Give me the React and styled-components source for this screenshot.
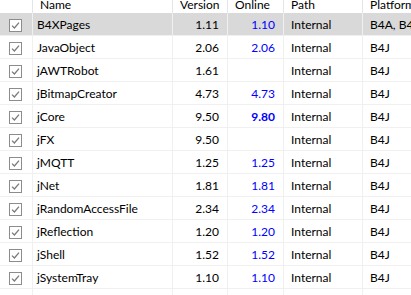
import React from "react";
import styled, { createGlobalStyle } from "styled-components";

const GlobalStyle = createGlobalStyle`
  html, body {
    margin: 0;
    padding: 0;
    background: #ffffff;
  }
  body {
    font-family: Lato, "Noto Sans", sans-serif;
    font-size: 12px;
    color: #000000;
  }
`;

const libraries = [
  { name: "B4XPages", version: "1.11", online: "1.10", path: "Internal", platform: "B4A, B4i, B4J", selected: true },
  { name: "JavaObject", version: "2.06", online: "2.06", path: "Internal", platform: "B4J" },
  { name: "jAWTRobot", version: "1.61", online: "", path: "Internal", platform: "B4J" },
  { name: "jBitmapCreator", version: "4.73", online: "4.73", path: "Internal", platform: "B4J" },
  { name: "jCore", version: "9.50", online: "9.80", path: "Internal", platform: "B4J", newer: true },
  { name: "jFX", version: "9.50", online: "", path: "Internal", platform: "B4J" },
  { name: "jMQTT", version: "1.25", online: "1.25", path: "Internal", platform: "B4J" },
  { name: "jNet", version: "1.81", online: "1.81", path: "Internal", platform: "B4J" },
  { name: "jRandomAccessFile", version: "2.34", online: "2.34", path: "Internal", platform: "B4J" },
  { name: "jReflection", version: "1.20", online: "1.20", path: "Internal", platform: "B4J" },
  { name: "jShell", version: "1.52", online: "1.52", path: "Internal", platform: "B4J" },
  { name: "jSystemTray", version: "1.10", online: "1.10", path: "Internal", platform: "B4J" },
];

function CheckBox() {
  return (
    <svg width="13" height="13" viewBox="0 0 13 13">
      <rect x="0.5" y="0.5" width="12" height="12" fill="#ffffff" stroke="#8c8c8c" />
      <path d="M3 6.6 L5.4 9 L10 3.6" fill="none" stroke="#7a7a7a" strokeWidth="1.3" />
    </svg>
  );
}

export default function App() {
  return (
    <>
      <GlobalStyle />
      <Viewport>
        <Table>
          <HeaderRow>
            <HeadCell />
            <HeadCell>Name</HeadCell>
            <HeadCell>Version</HeadCell>
            <HeadCell>Online</HeadCell>
            <HeadCell>Path</HeadCell>
            <HeadCell>Platform</HeadCell>
          </HeaderRow>
          {libraries.map((lib) => (
            <Row key={lib.name} $selected={lib.selected}>
              <CheckCell>
                <CheckBox />
              </CheckCell>
              <NameCell>{lib.name}</NameCell>
              <NumberCell>{lib.version}</NumberCell>
              <NumberCell $online $bold={lib.newer}>
                {lib.online}
              </NumberCell>
              <TextCell>{lib.path}</TextCell>
              <TextCell>{lib.platform}</TextCell>
            </Row>
          ))}
          <Row>
            <CheckCell />
            <NameCell />
            <NumberCell />
            <NumberCell />
            <TextCell />
            <TextCell />
          </Row>
        </Table>
      </Viewport>
    </>
  );
}

const Viewport = styled.div`
  width: 411px;
  height: 295px;
  overflow: hidden;
  background: #ffffff;
`;

const Table = styled.div`
  width: 480px;
`;

const columns = "33px 140px 55px 56px 79px 117px";

const HeaderRow = styled.div`
  display: grid;
  grid-template-columns: ${columns};
  height: 13px;
  overflow: hidden;
`;

const HeadCell = styled.div`
  box-sizing: border-box;
  border-right: 1px solid #e5e5e5;
  padding-left: 7px;
  line-height: 9px;
  white-space: nowrap;
  overflow: hidden;
`;

const Row = styled.div`
  display: grid;
  grid-template-columns: ${columns};
  box-sizing: border-box;
  height: 23px;
  border-bottom: 1px solid #f0f0f0;
  background: ${(p) => (p.$selected ? "#d9d9d9" : "#ffffff")};
`;

const Cell = styled.div`
  box-sizing: border-box;
  border-right: 1px solid #f0f0f0;
  line-height: 23px;
  white-space: nowrap;
  overflow: hidden;
`;

const CheckCell = styled(Cell)`
  display: flex;
  justify-content: center;
  align-items: flex-start;
  padding: 6px 1px 0 0;

  svg {
    display: block;
  }
`;

const NameCell = styled(Cell)`
  padding-left: 4px;
`;

const NumberCell = styled(Cell)`
  text-align: right;
  padding-right: 8px;
  color: ${(p) => (p.$online ? "#0000ff" : "#000000")};
  font-weight: ${(p) => (p.$bold ? 700 : 400)};
`;

const TextCell = styled(Cell)`
  padding-left: 7px;
`;
